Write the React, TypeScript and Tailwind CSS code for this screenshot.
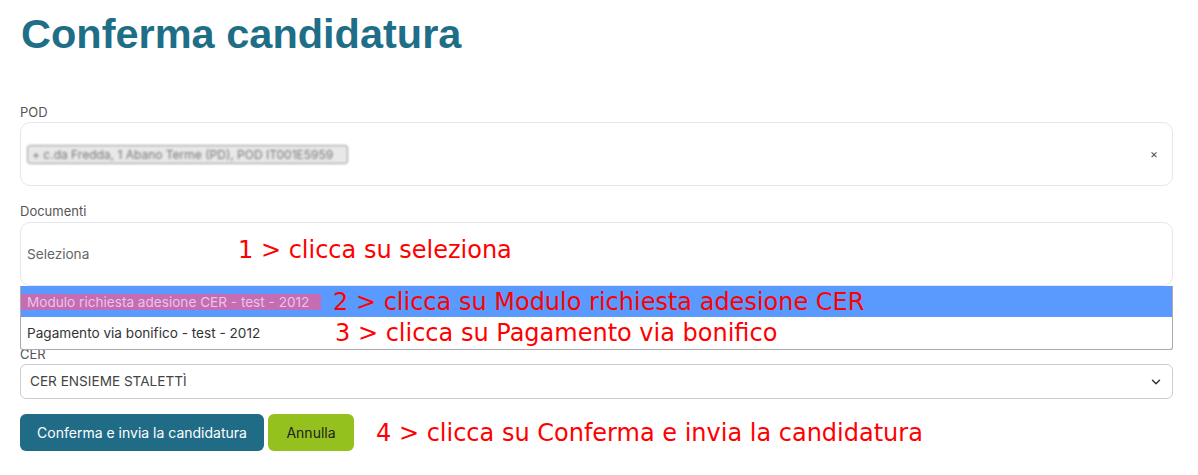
import { ChevronDown } from 'lucide-react';

const note = 'text-[24px] leading-none text-[#ff0000] font-["DejaVu_Sans",sans-serif]';

export default function App() {
  return (
    <div className='min-h-[475px] bg-white pl-5 pr-[25px] font-["Inter",sans-serif] text-[#444]'>
      <h1 className='pt-[9px] text-[41.5px] leading-[50px] font-bold text-[#1f6e87] font-["Liberation_Sans",Arial,sans-serif] ml-[1px]'>
        Conferma candidatura
      </h1>

      {/* POD */}
      <div className="mt-[45px] text-[13px] leading-4 text-[#555]">POD</div>
      <div className="mt-[2px] flex h-[64px] items-center justify-between rounded-[10px] border border-[#e6e6f0] pl-[6px] pr-[14px]">
        <span className="w-[321px] rounded-[3px] border border-[#999] bg-[#e8e8e8] px-1 text-[12px] leading-[17px] text-[#777] blur-[1px]">
          + c.da Fredda, 1 Abano Terme (PD), POD IT001E5959
        </span>
        <span className="text-[12px] leading-none text-[#555]">×</span>
      </div>

      {/* Documenti */}
      <div className="mt-[17px] text-[13px] leading-4 text-[#555]">Documenti</div>
      <div className="relative">
        <div className="mt-[3px] flex h-[64px] items-center rounded-[10px] border border-[#e6e6f0] pl-[6px]">
          <span className="w-[211px] text-[13.6px] text-[#666]">Seleziona</span>
          <span className={`mb-[8px] ${note}`}>1 &gt; clicca su seleziona</span>
        </div>

        {/* menu aperto */}
        <div className="absolute left-0 right-0 top-[64px] z-10 overflow-hidden rounded-b-[3px] border border-t-0 border-[#aaa] bg-white">
          <div className="flex h-[31px] items-center bg-[#5a9aff]">
            <span className="w-[300px] bg-[#c46cb4] pl-[6px] text-[13.6px] leading-4 text-[#ebc4e4]">
              Modulo richiesta adesione CER - test - 2012
            </span>
            <span className={`ml-[12px] ${note}`}>2 &gt; clicca su Modulo richiesta adesione CER</span>
          </div>
          <div className="flex h-[32px] items-center">
            <span className="w-[314px] pl-[6px] text-[13.6px] text-[#333]">Pagamento via bonifico - test - 2012</span>
            <span className={note}>3 &gt; clicca su Pagamento via bonifico</span>
          </div>
        </div>
      </div>

      {/* CER */}
      <div className="mt-[60px] text-[13px] leading-4 text-[#555]">CER</div>
      <div className="mt-[2px] flex h-[35px] items-center justify-between rounded-[6px] border border-[#ccc] pl-[9px] pr-[9px]">
        <span className="text-[13.6px] text-[#444]">CER ENSIEME STALETTÌ</span>
        <ChevronDown className="h-[14px] w-[14px] text-[#333]" strokeWidth={2.5} />
      </div>

      {/* azioni */}
      <div className="mt-[15px] flex items-center gap-1">
        <button className="h-[37px] w-[244px] rounded-[6px] bg-[#206c87] text-[14px] text-white">
          Conferma e invia la candidatura
        </button>
        <button className="h-[37px] w-[86px] rounded-[6px] bg-[#95c11f] text-[14px] text-[#222]">Annulla</button>
        <span className={`ml-[18px] ${note}`}>4 &gt; clicca su Conferma e invia la candidatura</span>
      </div>
    </div>
  );
}
